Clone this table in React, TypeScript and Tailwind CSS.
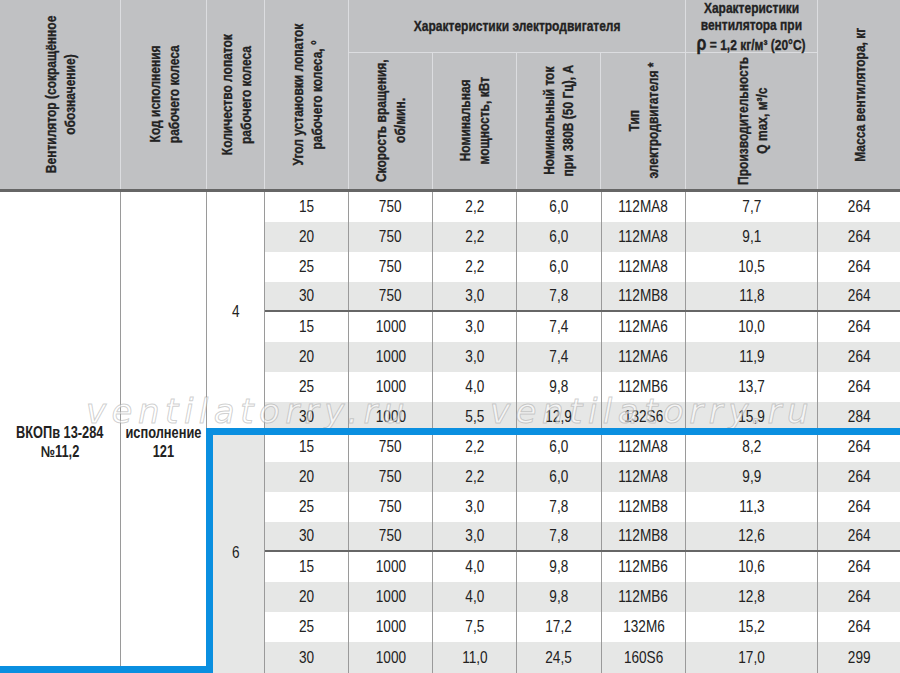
const rows = [
  ["15", "750", "2,2", "6,0", "112MA8", "7,7", "264"],
  ["20", "750", "2,2", "6,0", "112MA8", "9,1", "264"],
  ["25", "750", "2,2", "6,0", "112MA8", "10,5", "264"],
  ["30", "750", "3,0", "7,8", "112MB8", "11,8", "264"],
  ["15", "1000", "3,0", "7,4", "112MA6", "10,0", "264"],
  ["20", "1000", "3,0", "7,4", "112MA6", "11,9", "264"],
  ["25", "1000", "4,0", "9,8", "112MB6", "13,7", "264"],
  ["30", "1000", "5,5", "12,9", "132S6", "15,9", "284"],
  ["15", "750", "2,2", "6,0", "112MA8", "8,2", "264"],
  ["20", "750", "2,2", "6,0", "112MA8", "9,9", "264"],
  ["25", "750", "3,0", "7,8", "112MB8", "11,3", "264"],
  ["30", "750", "3,0", "7,8", "112MB8", "12,6", "264"],
  ["15", "1000", "4,0", "9,8", "112MB6", "10,6", "264"],
  ["20", "1000", "4,0", "9,8", "112MB6", "12,8", "264"],
  ["25", "1000", "7,5", "17,2", "132M6", "15,2", "264"],
  ["30", "1000", "11,0", "24,5", "160S6", "17,0", "299"],
];

const cellW = ["w-[84px]", "w-[84px]", "w-[84px]", "w-[85px]", "w-[84px]", "w-[132px]", "w-[82px]"];

// condensed look: no narrow font installed, so squeeze Liberation Sans
function N({ children }: { children: React.ReactNode }) {
  return <span className="inline-block scale-x-[0.8] whitespace-nowrap">{children}</span>;
}

function VText({ lines }: { lines: React.ReactNode[] }) {
  return (
    <div className="rotate-180 scale-y-[0.8] whitespace-nowrap text-center leading-[19px] [writing-mode:vertical-rl]">
      {lines.map((l, i) => (
        <div key={i}>{l}</div>
      ))}
    </div>
  );
}

const hLine = "border-[#dcdde0]";
const bLine = "border-[#9a9a9a]";
const vCell = "flex min-h-0 items-center justify-center overflow-visible";

export default function App() {
  return (
    <div className="relative h-[673px] w-[900px] overflow-hidden bg-white font-['Liberation_Sans',Arial,sans-serif] text-[#222]">
      {/* ── Header ─────────────────────────────── */}
      <div className="flex h-[192px] border-b-[3px] border-[#666] bg-[#c0c1c3] text-[15px] font-bold [-webkit-text-stroke:0.35px_#222]">
        <div className={`${vCell} w-[121px] border-r ${hLine}`}>
          <VText lines={["Вентилятор (сокращённое", "обозначение)"]} />
        </div>
        <div className={`${vCell} w-[86px] border-r ${hLine}`}>
          <VText lines={["Код исполнения", "рабочего колеса"]} />
        </div>
        <div className={`${vCell} w-[58px] border-r ${hLine}`}>
          <VText lines={["Количество лопаток", "рабочего колеса"]} />
        </div>
        <div className={`${vCell} w-[84px] border-r ${hLine}`}>
          <VText lines={["Угол установки лопаток", "рабочего колеса, °"]} />
        </div>

        {/* motor group */}
        <div className={`flex w-[337px] flex-col border-r ${hLine}`}>
          <div className={`flex h-[53px] shrink-0 items-center justify-center border-b ${hLine}`}>
            <N>Характеристики электродвигателя</N>
          </div>
          <div className="flex min-h-0 flex-1">
            <div className={`${vCell} w-[84px] border-r ${hLine}`}>
              <VText lines={["Скорость вращения,", "об/мин."]} />
            </div>
            <div className={`${vCell} w-[84px] border-r ${hLine}`}>
              <VText lines={["Номинальная", "мощность, кВт"]} />
            </div>
            <div className={`${vCell} w-[85px] border-r ${hLine}`}>
              <VText lines={["Номинальный ток", "при 380В (50 Гц), А"]} />
            </div>
            <div className={`${vCell} w-[84px]`}>
              <VText lines={["Тип", "электродвигателя *"]} />
            </div>
          </div>
        </div>

        {/* fan group */}
        <div className={`flex w-[132px] flex-col border-r ${hLine}`}>
          <div className={`flex h-[53px] shrink-0 flex-col items-center justify-center border-b ${hLine} pt-[2px] text-center leading-[16.5px]`}>
            <N>Характеристики</N>
            <N>вентилятора при</N>
            <N>
              <span className="text-[20px] leading-none">ρ</span> = 1,2 кг/м³ (20°C)
            </N>
          </div>
          <div className={`${vCell} flex-1`}>
            <VText lines={["Производительность", "Q max, м³/с"]} />
          </div>
        </div>

        <div className={`${vCell} w-[82px]`}>
          <VText lines={["Масса вентилятора, кг"]} />
        </div>
      </div>

      {/* ── Body ───────────────────────────────── */}
      <div className="flex h-[481px]">
        <div className={`flex w-[121px] items-center justify-center border-r ${bLine} pt-[19px] text-center text-[16px] font-bold leading-[19px]`}>
          <div className="flex flex-col items-center">
            <N>ВКОПв 13-284</N>
            <N>№11,2</N>
          </div>
        </div>
        <div className={`flex w-[86px] items-center justify-center border-r ${bLine} pt-[19px] text-center text-[16px] font-bold leading-[19px]`}>
          <div className="flex flex-col items-center">
            <N>исполнение</N>
            <N>121</N>
          </div>
        </div>
        <div className={`flex w-[58px] flex-col border-r ${bLine} text-[17px]`}>
          <div className="flex h-[240px] items-center justify-center">
            <N>4</N>
          </div>
          <div className="flex flex-1 items-center justify-center bg-[#e6e7e6]">
            <N>6</N>
          </div>
        </div>
        <div className="flex flex-1 flex-col text-[17px]">
          {rows.map((r, i) => (
            <div
              key={i}
              className={`flex ${i === 15 ? "h-[31px]" : "h-[30px]"} ${i % 2 === 1 ? "bg-[#e6e7e6]" : "bg-white"} ${
                i === 3 || i === 11 ? "border-b-2 border-[#666]" : ""
              }`}
            >
              {r.map((v, j) => (
                <div
                  key={j}
                  className={`flex ${cellW[j]} items-center justify-center ${j < 6 ? `border-r ${bLine}` : ""}`}
                >
                  <N>{v}</N>
                </div>
              ))}
            </div>
          ))}
        </div>
      </div>

      {/* ── Watermark ─────────────────────────── */}
      <div className="pointer-events-none absolute left-0 top-[386px] h-[50px] w-full font-['DejaVu_Sans',sans-serif] text-[34px] font-extralight italic leading-[50px] tracking-[5.5px] text-white/55 [-webkit-text-stroke:1px_rgba(150,150,150,0.45)]">
        <span className="absolute left-[86px]">ventilatorry.ru</span>
        <span className="absolute left-[490px]">ventilatorry.ru</span>
      </div>

      {/* ── Blue highlight ────────────────────── */}
      <div className="pointer-events-none absolute left-[206px] right-0 top-[428px] h-[7px] bg-[#0a8fe0]" />
      <div className="pointer-events-none absolute bottom-0 left-[206px] top-[428px] w-[7px] bg-[#0a8fe0]" />
      <div className="pointer-events-none absolute bottom-0 left-0 h-[7px] w-[213px] bg-[#0a8fe0]" />
    </div>
  );
}
